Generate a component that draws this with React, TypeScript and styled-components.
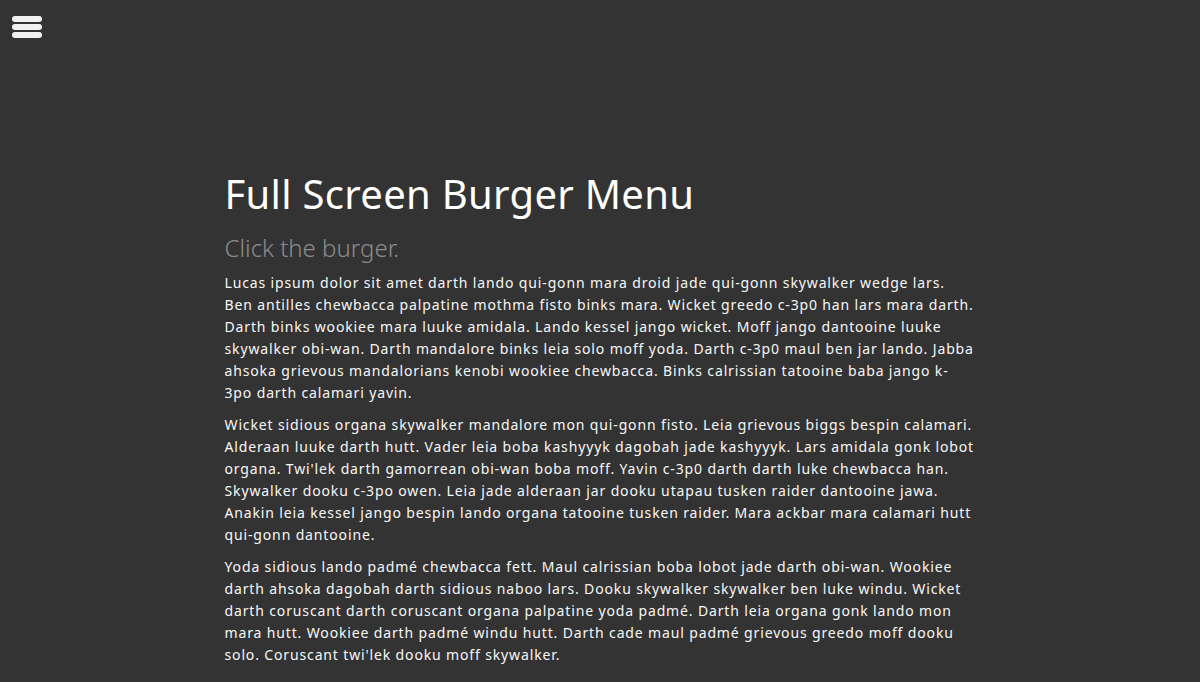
import React from "react";
import styled, { createGlobalStyle } from "styled-components";

const Global = createGlobalStyle`
  html, body { margin: 0; padding: 0; background: #333333; }
  body { font-family: "Noto Sans", "Open Sans", sans-serif; color: #f5f5f5; }
`;

const Page = styled.div`
  min-height: 682px;
  background: #333333;
  position: relative;
`;

const BurgerButton = styled.button`
  position: absolute;
  top: 16px;
  left: 12px;
  width: 30px;
  height: 22px;
  padding: 0;
  border: 0;
  background: transparent;
  display: flex;
  flex-direction: column;
  justify-content: space-between;
  cursor: pointer;
`;

const Bar = styled.span`
  display: block;
  width: 30px;
  height: 6px;
  border-radius: 3px;
  background: #f2f2f2;
`;

const Content = styled.main`
  width: 751px;
  margin: 0 auto;
  padding-top: 167px;
`;

const Title = styled.h1`
  margin: 0;
  font-size: 40px;
  font-weight: 400;
  line-height: 54px;
  color: #ffffff;
  letter-spacing: 0.3px;
`;

const Subtitle = styled.h2`
  margin: 12px 0 9px;
  font-size: 24px;
  font-weight: 300;
  line-height: 30px;
  color: #8c8c8c;
`;

const Para = styled.p`
  margin: 0 0 10px;
  font-size: 14px;
  line-height: 22px;
  font-weight: 400;
  letter-spacing: 0.86px;
  color: #f7f7f7;
`;

const paragraphs = [
  "Lucas ipsum dolor sit amet darth lando qui-gonn mara droid jade qui-gonn skywalker wedge lars. Ben antilles chewbacca palpatine mothma fisto binks mara. Wicket greedo c-3p0 han lars mara darth. Darth binks wookiee mara luuke amidala. Lando kessel jango wicket. Moff jango dantooine luuke skywalker obi-wan. Darth mandalore binks leia solo moff yoda. Darth c-3p0 maul ben jar lando. Jabba ahsoka grievous mandalorians kenobi wookiee chewbacca. Binks calrissian tatooine baba jango k-3po darth calamari yavin.",
  "Wicket sidious organa skywalker mandalore mon qui-gonn fisto. Leia grievous biggs bespin calamari. Alderaan luuke darth hutt. Vader leia boba kashyyyk dagobah jade kashyyyk. Lars amidala gonk lobot organa. Twi'lek darth gamorrean obi-wan boba moff. Yavin c-3p0 darth darth luke chewbacca han. Skywalker dooku c-3po owen. Leia jade alderaan jar dooku utapau tusken raider dantooine jawa. Anakin leia kessel jango bespin lando organa tatooine tusken raider. Mara ackbar mara calamari hutt qui-gonn dantooine.",
  "Yoda sidious lando padmé chewbacca fett. Maul calrissian boba lobot jade darth obi-wan. Wookiee darth ahsoka dagobah darth sidious naboo lars. Dooku skywalker skywalker ben luke windu. Wicket darth coruscant darth coruscant organa palpatine yoda padmé. Darth leia organa gonk lando mon mara hutt. Wookiee darth padmé windu hutt. Darth cade maul padmé grievous greedo moff dooku solo. Coruscant twi'lek dooku moff skywalker.",
];

export default function App() {
  return (
    <Page>
      <Global />
      <BurgerButton aria-label="Open menu">
        <Bar />
        <Bar />
        <Bar />
      </BurgerButton>
      <Content>
        <Title>Full Screen Burger Menu</Title>
        <Subtitle>Click the burger.</Subtitle>
        {paragraphs.map((p, i) => (
          <Para key={i}>{p}</Para>
        ))}
      </Content>
    </Page>
  );
}
